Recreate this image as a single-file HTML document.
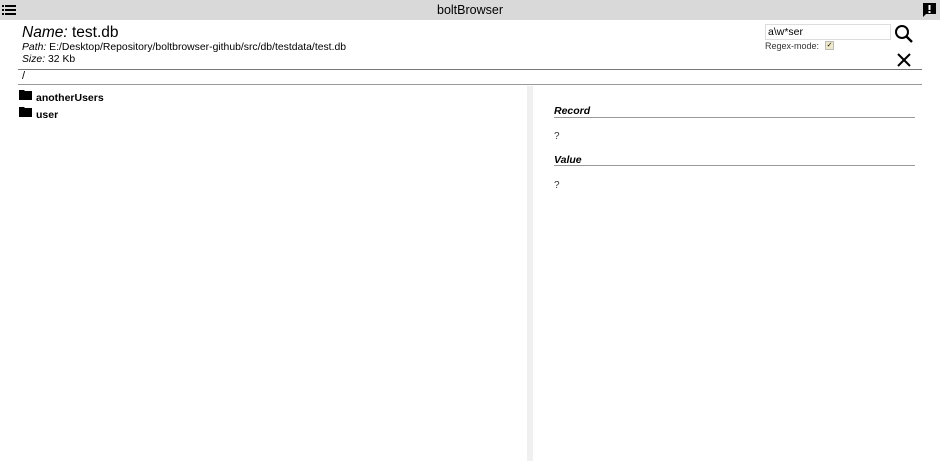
<!DOCTYPE html>
<html><head><style>
body{margin:0;width:940px;height:461px;background:#fff;font-family:"Liberation Sans",sans-serif;color:#000;position:relative;overflow:hidden}
.a{position:absolute;white-space:nowrap}
</style></head><body>
<div class="a" style="left:0;top:0;width:940px;height:20px;background:#d9d9d9"></div>
<svg class="a" style="left:2px;top:4px" width="14" height="12" viewBox="0 0 14 12"><rect x="0" y="1" width="2" height="2"/><rect x="3" y="1" width="11" height="2"/><rect x="0" y="5" width="2" height="2"/><rect x="3" y="5" width="11" height="2"/><rect x="0" y="9" width="2" height="2"/><rect x="3" y="9" width="11" height="2"/></svg>
<div class="a" style="left:0;width:940px;top:3px;text-align:center;font-size:12.5px">boltBrowser</div>
<svg class="a" style="left:922px;top:2px" width="15" height="16" viewBox="0 0 15 16"><path d="M1 1h13v11H4l-3 3z"/><rect x="6.5" y="3" width="2" height="5" fill="#fff"/><rect x="6.5" y="9" width="2" height="2" fill="#fff"/></svg>
<div class="a" style="left:22px;top:24px;font-size:15.5px"><i>Name:</i> test.db</div>
<div class="a" style="left:22px;top:42px;font-size:10.4px"><i>Path:</i> E:/Desktop/Repository/boltbrowser-github/src/db/testdata/test.db</div>
<div class="a" style="left:22px;top:54px;font-size:10.4px"><i>Size:</i> 32 Kb</div>
<div class="a" style="left:765px;top:24px;width:122px;height:14px;border:1px solid #ddd;font-size:10.5px;line-height:14px;padding-left:2px">a\w*ser</div>
<div class="a" style="left:765px;top:41px;font-size:9px;color:#333">Regex-mode:</div>
<div class="a" style="left:825px;top:41px;width:7px;height:7px;background:#eee8c8;border:1px solid #bbb;font-size:7px;line-height:7px;text-align:center">✓</div>
<svg class="a" style="left:894px;top:24px" width="20" height="20" viewBox="0 0 20 20"><circle cx="8" cy="8" r="6" fill="none" stroke="#000" stroke-width="2"/><path d="M12.5 12.5L18 18" stroke="#000" stroke-width="2.4"/></svg>
<svg class="a" style="left:896px;top:52px" width="16" height="16" viewBox="0 0 16 16"><path d="M2 2L14 14M14 2L2 14" stroke="#000" stroke-width="2"/></svg>
<div class="a" style="left:18px;top:69px;width:904px;height:1px;background:#777"></div>
<div class="a" style="left:22px;top:70px;font-size:11px">/</div>
<div class="a" style="left:18px;top:84px;width:904px;height:1px;background:#999"></div>
<svg class="a" style="left:19px;top:89px" width="13" height="11" viewBox="0 0 13 11"><path d="M0 1h5l1 1h7v9H0z"/></svg>
<div class="a" style="left:36px;top:92px;font-size:10.5px;font-weight:bold">anotherUsers</div>
<svg class="a" style="left:19px;top:106px" width="13" height="11" viewBox="0 0 13 11"><path d="M0 1h5l1 1h7v9H0z"/></svg>
<div class="a" style="left:36px;top:109px;font-size:10.5px;font-weight:bold">user</div>
<div class="a" style="left:527px;top:86px;width:6px;height:375px;background:#f0f0f0"></div>
<div class="a" style="left:554px;top:105px;font-size:10.5px;font-weight:bold;font-style:italic">Record</div>
<div class="a" style="left:554px;top:117px;width:361px;height:1px;background:#999"></div>
<div class="a" style="left:554px;top:131px;font-size:10px;color:#333">?</div>
<div class="a" style="left:554px;top:154px;font-size:10.5px;font-weight:bold;font-style:italic">Value</div>
<div class="a" style="left:554px;top:165px;width:361px;height:1px;background:#999"></div>
<div class="a" style="left:554px;top:180px;font-size:10px;color:#333">?</div>
</body></html>
